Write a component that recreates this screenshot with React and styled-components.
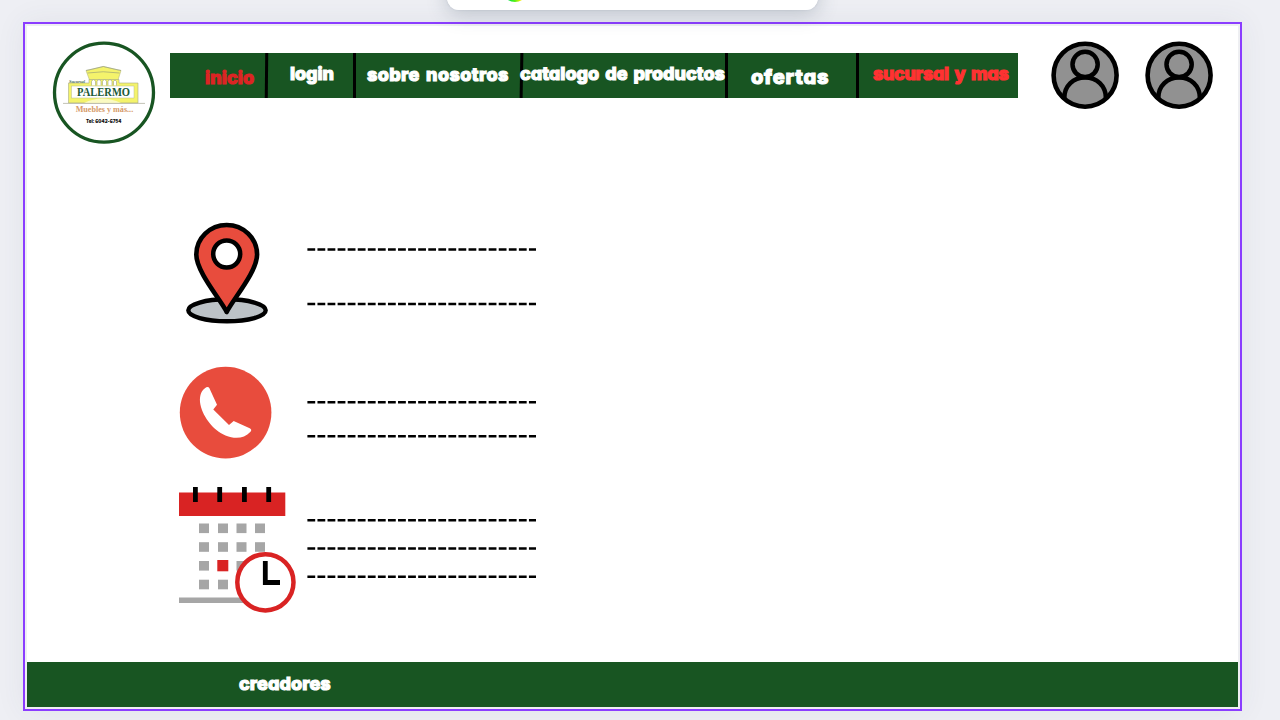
import React from "react";
import styled, { createGlobalStyle } from "styled-components";

const Global = createGlobalStyle`
  *, *::before, *::after { box-sizing: border-box; }
  html, body { margin: 0; height: 100%; overflow: hidden; }
  body { background: #eeeff4; }
`;

const Workspace = styled.div`
  position: relative;
  width: 1280px;
  height: 720px;
  padding: 22px 38px 9px 23px;
  overflow: hidden;
  background: #eeeff4;
`;

const FloatingPanel = styled.div`
  position: absolute;
  top: -40px;
  left: 447px;
  width: 371px;
  height: 50px;
  border-radius: 0 0 12px 12px;
  background: #fff;
  overflow: hidden;
`;

const PanelShadow = styled.div`
  position: absolute;
  top: -40px;
  left: 447px;
  width: 371px;
  height: 50px;
  border-radius: 12px;
  box-shadow: 0 4px 20px rgba(57, 76, 96, 0.26), 0 0 2px rgba(57, 76, 96, 0.15);
`;

const ColorDot = styled.span`
  position: absolute;
  left: 55px;
  bottom: 8px;
  width: 26px;
  height: 26px;
  border-radius: 50%;
  background: linear-gradient(90deg, #00e03c 25%, #58f018 50%, #f4ee00 72%);
`;

const Frame = styled.div`
  width: 1219px;
  height: 689px;
  padding: 2px;
  border: 2px solid #8b3dff;
  background: #eeeff2;
  box-shadow: 0 0 28px rgba(57, 76, 96, 0.07);
`;

const Page = styled.div`
  display: flex;
  flex-direction: column;
  width: 1211px;
  height: 681px;
  background: #fff;
`;

const Header = styled.header`
  display: flex;
  align-items: flex-start;
  height: 190px;
  padding: 15px 0 0 25px;
`;

const Nav = styled.nav`
  display: flex;
  width: 848px;
  height: 45px;
  margin: 12px 0 0 14px;
  background: #185522;
`;

const NavItem = styled.div`
  flex: none;
  width: ${(p) => p.$width}px;
  padding: ${(p) => p.$top}px 0 0 ${(p) => p.$left}px;
`;

const Divider = styled.span`
  flex: none;
  width: 2.6px;
  margin-right: 0.4px;
  height: 45px;
  background: #000;
  transform: rotate(${(p) => p.$tilt || 0}deg);
`;

const Label = styled.span`
  display: block;
  position: relative;
  z-index: 1;
  width: max-content;
  margin-left: ${(p) => p.$shift || 0}px;
  color: ${(p) => p.$color || "#fff"};
  font: 800 ${(p) => p.$size || 18}px/24px Inter, "Open Sans", sans-serif;
  font-feature-settings: "cv11" 1;
  letter-spacing: ${(p) => p.$track || 0}px;
  word-spacing: 2px;
  white-space: nowrap;
  -webkit-text-stroke: 1.1px currentColor;
  paint-order: stroke fill;
  stroke-linejoin: round;
`;

const Avatars = styled.div`
  display: flex;
  gap: 25px;
  margin-left: 33px;
`;

const Contact = styled.main`
  display: flex;
  flex-direction: column;
  flex: 1;
  padding-left: 151px;
`;

const ContactRow = styled.section`
  display: flex;
  gap: 9px;
  height: ${(p) => p.$height}px;
`;

const Footer = styled.footer`
  height: 45px;
  padding: 10px 0 0 212px;
  background: #185522;
`;

function Logo() {
  return (
    <svg width="104" height="104" viewBox="52 41 104 104">
      <circle cx="104" cy="92.6" r="49.5" fill="#fff" stroke="#185522" strokeWidth="3.300" />
      <path d="M86 70.500L90 69.800L103.300 66.500L117 69.800L121 70.500L118 80H89.500Z" fill="#f4f36b" stroke="#b9bc80" strokeWidth=".6" />
      <path d="M86 70.500L103.300 66.500L121 70.500M87.500 73Q103 70.500 119.500 73" fill="none" stroke="#909779" strokeWidth=".6" />
      <path d="M68.500 83H89V79.500H119V83H138V103H68.500Z" fill="#f4f36b" stroke="#a9ac87" strokeWidth=".6" />
      <path d="M91.500 85.500V81.500q2-4 4 0v4M97 85.500V81.500q2-4 4 0v4M102.500 85.500V81.500q2-4 4 0v4M108 85.500V81.500q2-4 4 0v4M113.500 85.500V81.500q1.500-3 3 0v4" fill="#fff" stroke="#9aa078" strokeWidth=".6" />
      <rect x="71.500" y="86" width="62.500" height="12" fill="#fff" stroke="#b9bc91" strokeWidth=".5" />
      <path d="M84 103Q102 94 121 103Z" fill="#fafac2" />
      <path d="M63 103.400H145" stroke="#a9a996" strokeWidth=".7" />
      <text x="69" y="82.500" textLength="16" lengthAdjust="spacingAndGlyphs" fontFamily="Liberation Serif, serif" fontStyle="italic" fontWeight="700" fontSize="4.500" fill="#4d7058">Sucursal</text>
      <text x="77" y="96.300" textLength="53" lengthAdjust="spacingAndGlyphs" fontFamily="Liberation Serif, serif" fontWeight="700" fontSize="11.500" fill="#1b5936">PALERMO</text>
      <text x="75.700" y="111.800" textLength="57.500" lengthAdjust="spacingAndGlyphs" fontFamily="Liberation Serif, serif" fontWeight="700" fontSize="8" fill="#d69a68">Muebles y más...</text>
      <text x="86" y="122.600" textLength="35.500" lengthAdjust="spacingAndGlyphs" fontFamily="Inter, sans-serif" fontWeight="900" fontSize="5" fill="#111">Tel: 6042-6754</text>
    </svg>
  );
}

function Avatar() {
  return (
    <svg width="68.500" height="69" viewBox="0 0 68.500 69">
      <circle cx="34.100" cy="34.200" r="31.500" fill="#919191" stroke="#000" strokeWidth="4.600" />
      <circle cx="34.100" cy="23.400" r="12.600" fill="none" stroke="#000" strokeWidth="4.500" />
      <path d="M13.300 57C13.300 44.500 22.500 36.400 34.100 36.400S54.900 44.500 54.900 57" fill="none" stroke="#000" strokeWidth="4.500" />
    </svg>
  );
}

function PinIcon() {
  return (
    <svg width="120" height="130" viewBox="178 216 120 130">
      <ellipse cx="227" cy="310.300" rx="38.700" ry="11" fill="#bdc3c7" stroke="#000" strokeWidth="4.400" />
      <path d="M226.700 312C221 300 196.300 272 196.300 254.500A30.400 29.500 0 0 1 257.100 254.500C257.100 272 232.400 300 226.700 312Z" fill="#e84c3d" stroke="#000" strokeWidth="4.600" strokeLinejoin="round" />
      <circle cx="226.700" cy="254" r="13.500" fill="#fff" stroke="#000" strokeWidth="4.500" />
    </svg>
  );
}

function PhoneIcon() {
  return (
    <svg width="120" height="120" viewBox="178 346 120 120">
      <circle cx="225.600" cy="412.600" r="45.800" fill="#e84c3d" />
      <path d="M206.300 387.200Q208.300 386.300 209.300 388L217 404.700L213.300 409.500L229 425L233.700 421L249.700 428.300Q252.300 429.700 250.500 431.700C244 438.500 235.500 439.500 225.500 435.500C212.500 430 201.500 415 200 402C199.500 395 201.500 390 206.300 387.200Z" fill="#fff" />
    </svg>
  );
}

function CalendarIcon() {
  const columns = [199, 218, 236.5, 255];
  const rows = [523.5, 542.2, 561, 579.7];
  return (
    <svg width="120" height="150" viewBox="178 466 120 150">
      <rect x="179" y="492.500" width="106.300" height="23.500" fill="#d92323" />
      {[193, 217.3, 242, 266.3].map((x) => (
        <rect key={x} x={x} y="487" width="4.800" height="15" fill="#000" />
      ))}
      {rows.map((y, r) => columns.map((x, c) => {
        const today = r === 2 && c === 1;
        return <rect key={`${r}-${c}`} x={today ? x - 0.7 : x} y={today ? y - 1 : y} width={today ? 11 : 10} height={today ? 11.3 : 9.6} fill={today ? "#d92323" : "#a6a6a6"} />;
      }))}
      <rect x="179" y="597.500" width="70" height="5.500" fill="#a6a6a6" />
      <circle cx="265.400" cy="582.300" r="28.100" fill="#fff" stroke="#d92323" strokeWidth="4.500" />
      <path d="M265.300 561V582.500H280" fill="none" stroke="#000" strokeWidth="4.800" />
    </svg>
  );
}

function DashedLines({ at }) {
  return (
    <svg width="229" height="120" viewBox="0 0 229 120">
      {at.map((y) => (
        <path key={y} d={`M.400 ${y}H229`} fill="none" stroke="#000" strokeWidth="2.500" strokeDasharray="7.800 2.270" />
      ))}
    </svg>
  );
}

export default function App() {
  return (
    <>
      <Global />
      <Workspace>
        <Frame>
          <Page>
            <Header>
              <Logo />
              <Nav>
                <NavItem $width={95} $left={35} $top={13}><Label $color="#dc2424" $track={0.1}>inicio</Label></NavItem>
                <Divider $tilt={0.6} />
                <NavItem $width={85} $left={22} $top={9}><Label $track={-0.1}>login</Label></NavItem>
                <Divider />
                <NavItem $width={164} $left={11} $top={10}><Label $track={0.4}>sobre nosotros</Label></NavItem>
                <Divider $tilt={1} />
                <NavItem $width={202} $left={0} $top={9}><Label $shift={-3}>catalogo de productos</Label></NavItem>
                <Divider />
                <NavItem $width={128} $left={23} $top={12}><Label $size={20} $track={0.8}>ofertas</Label></NavItem>
                <Divider />
                <NavItem $width={159} $left={14} $top={9}><Label $color="#ff3232" $track={-0.3}>sucursal y mas</Label></NavItem>
              </Nav>
              <Avatars>
                <Avatar />
                <Avatar />
              </Avatars>
            </Header>
            <Contact>
              <ContactRow $height={130}>
                <PinIcon />
                <DashedLines at={[33.4, 87.9]} />
              </ContactRow>
              <ContactRow $height={120}>
                <PhoneIcon />
                <DashedLines at={[56.3, 90.3]} />
              </ContactRow>
              <ContactRow $height={150}>
                <CalendarIcon />
                <DashedLines at={[54.3, 82.4, 110.8]} />
              </ContactRow>
            </Contact>
            <Footer><Label $track={0.1}>creadores</Label></Footer>
          </Page>
        </Frame>
        <PanelShadow />
        <FloatingPanel><ColorDot /></FloatingPanel>
      </Workspace>
    </>
  );
}
